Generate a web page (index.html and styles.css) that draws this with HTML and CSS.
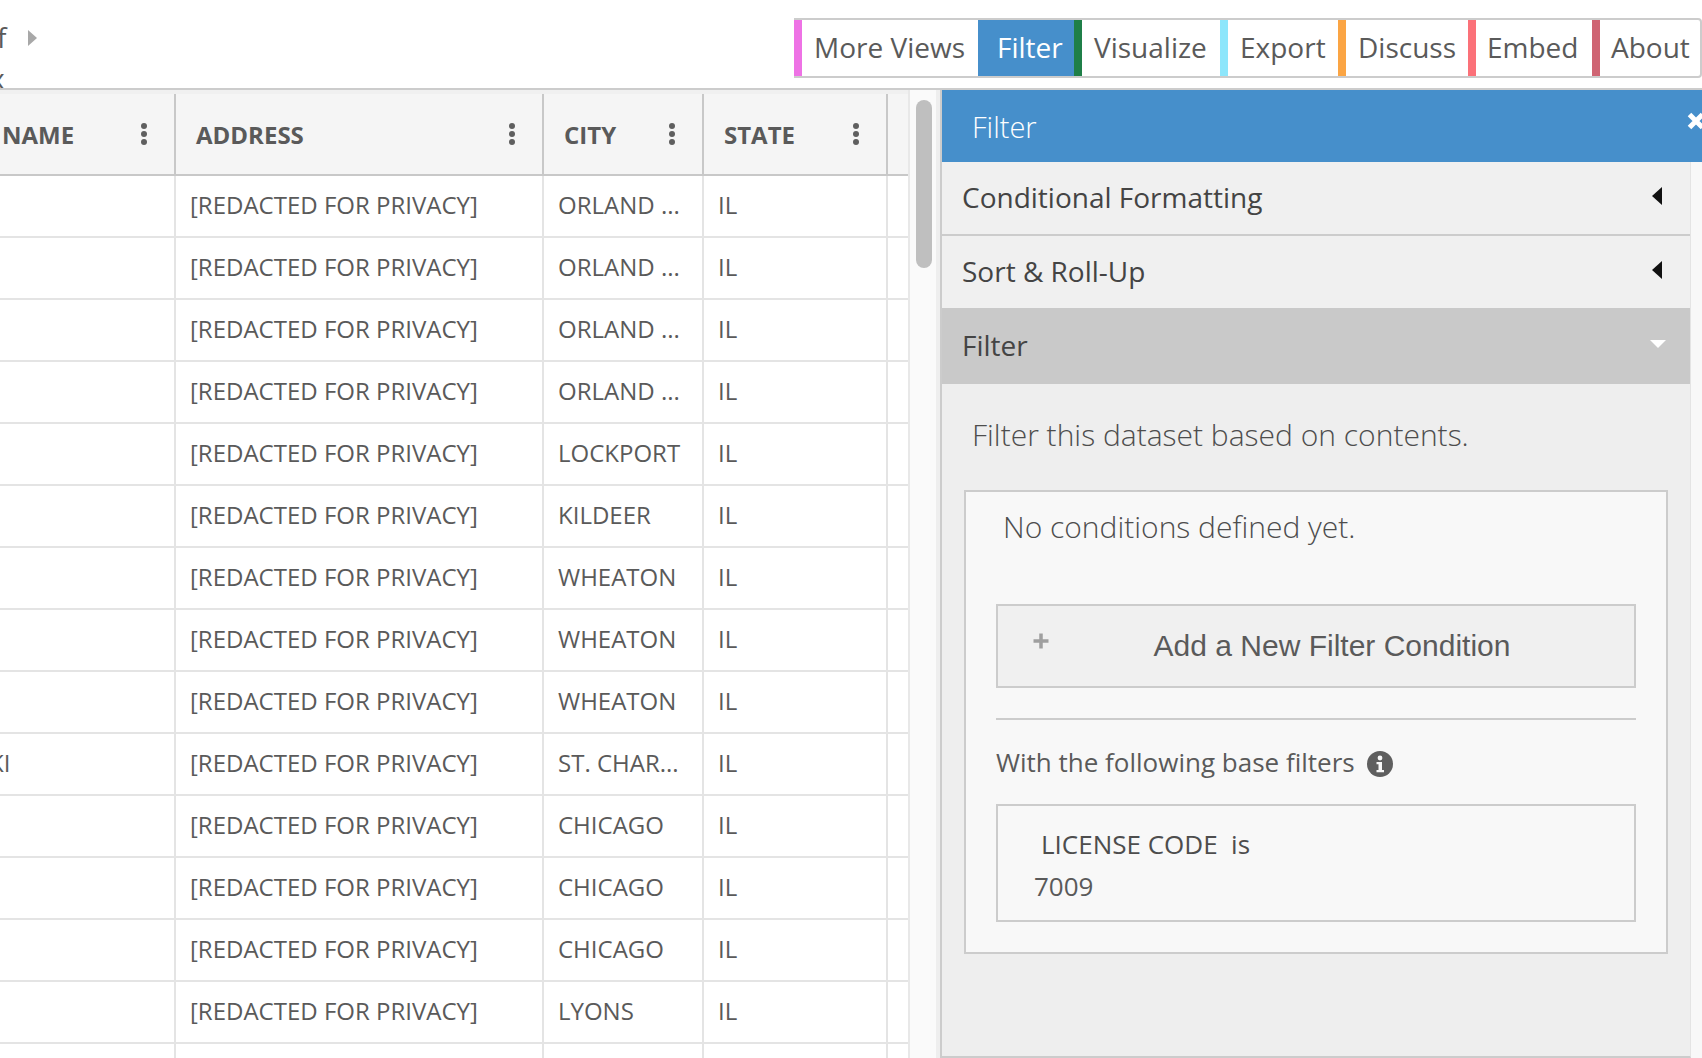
FILE: index.html
```html
<!DOCTYPE html>
<html lang="en">
<head>
<meta charset="utf-8">
<title>Filter</title>
<link rel="stylesheet" href="styles.css">
</head>
<body>
<header class="topbar">
  <div class="crumb">
    <span class="crumb-f">f</span>
    <span class="crumb-arrow"></span>
    <span class="crumb-k">x</span>
  </div>
  <nav class="tabs">
    <a class="tab c-pink">More Views</a>
    <a class="tab c-blue active">Filter</a>
    <a class="tab c-green">Visualize</a>
    <a class="tab c-cyan">Export</a>
    <a class="tab c-orange">Discuss</a>
    <a class="tab c-red">Embed</a>
    <a class="tab c-rose">About</a>
  </nav>
</header>
<main class="main">
  <section class="grid">
    <div class="grid-row head">
      <div class="cell c1"><span class="htext">NAME</span><i class="kebab"></i></div>
      <div class="cell c2"><span class="htext">ADDRESS</span><i class="kebab"></i></div>
      <div class="cell c3"><span class="htext">CITY</span><i class="kebab"></i></div>
      <div class="cell c4"><span class="htext">STATE</span><i class="kebab"></i></div>
      <div class="cell c5"></div>
    </div>
    <div class="grid-row"><div class="cell c1"></div><div class="cell c2">[REDACTED FOR PRIVACY]</div><div class="cell c3">ORLAND ...</div><div class="cell c4">IL</div><div class="cell c5"></div></div>
    <div class="grid-row"><div class="cell c1"></div><div class="cell c2">[REDACTED FOR PRIVACY]</div><div class="cell c3">ORLAND ...</div><div class="cell c4">IL</div><div class="cell c5"></div></div>
    <div class="grid-row"><div class="cell c1"></div><div class="cell c2">[REDACTED FOR PRIVACY]</div><div class="cell c3">ORLAND ...</div><div class="cell c4">IL</div><div class="cell c5"></div></div>
    <div class="grid-row"><div class="cell c1"></div><div class="cell c2">[REDACTED FOR PRIVACY]</div><div class="cell c3">ORLAND ...</div><div class="cell c4">IL</div><div class="cell c5"></div></div>
    <div class="grid-row"><div class="cell c1"></div><div class="cell c2">[REDACTED FOR PRIVACY]</div><div class="cell c3">LOCKPORT</div><div class="cell c4">IL</div><div class="cell c5"></div></div>
    <div class="grid-row"><div class="cell c1"></div><div class="cell c2">[REDACTED FOR PRIVACY]</div><div class="cell c3">KILDEER</div><div class="cell c4">IL</div><div class="cell c5"></div></div>
    <div class="grid-row"><div class="cell c1"></div><div class="cell c2">[REDACTED FOR PRIVACY]</div><div class="cell c3">WHEATON</div><div class="cell c4">IL</div><div class="cell c5"></div></div>
    <div class="grid-row"><div class="cell c1"></div><div class="cell c2">[REDACTED FOR PRIVACY]</div><div class="cell c3">WHEATON</div><div class="cell c4">IL</div><div class="cell c5"></div></div>
    <div class="grid-row"><div class="cell c1"></div><div class="cell c2">[REDACTED FOR PRIVACY]</div><div class="cell c3">WHEATON</div><div class="cell c4">IL</div><div class="cell c5"></div></div>
    <div class="grid-row"><div class="cell c1 name-tail">KI</div><div class="cell c2">[REDACTED FOR PRIVACY]</div><div class="cell c3">ST. CHAR...</div><div class="cell c4">IL</div><div class="cell c5"></div></div>
    <div class="grid-row"><div class="cell c1"></div><div class="cell c2">[REDACTED FOR PRIVACY]</div><div class="cell c3">CHICAGO</div><div class="cell c4">IL</div><div class="cell c5"></div></div>
    <div class="grid-row"><div class="cell c1"></div><div class="cell c2">[REDACTED FOR PRIVACY]</div><div class="cell c3">CHICAGO</div><div class="cell c4">IL</div><div class="cell c5"></div></div>
    <div class="grid-row"><div class="cell c1"></div><div class="cell c2">[REDACTED FOR PRIVACY]</div><div class="cell c3">CHICAGO</div><div class="cell c4">IL</div><div class="cell c5"></div></div>
    <div class="grid-row"><div class="cell c1"></div><div class="cell c2">[REDACTED FOR PRIVACY]</div><div class="cell c3">LYONS</div><div class="cell c4">IL</div><div class="cell c5"></div></div>
    <div class="grid-row"><div class="cell c1"></div><div class="cell c2"></div><div class="cell c3"></div><div class="cell c4"></div><div class="cell c5"></div></div>
  </section>
  <div class="scroll"><div class="thumb"></div></div>
  <aside class="panel">
    <div class="panel-head"><span>Filter</span>
      <svg class="close" viewBox="0 0 20 20" width="20" height="20" aria-hidden="true"><path d="M3.500 3.500l13 13M16.500 3.500l-13 13" stroke="#fff" stroke-width="5"/></svg>
    </div>
    <div class="panel-body">
      <div class="acc"><span>Conditional Formatting</span><i class="tri-left"></i></div>
      <div class="acc"><span>Sort &amp; Roll-Up</span><i class="tri-left"></i></div>
      <div class="acc open"><span>Filter</span><i class="tri-down"></i></div>
      <p class="intro">Filter this dataset based on contents.</p>
      <div class="box">
        <p class="none">No conditions defined yet.</p>
        <div class="add">
          <svg class="plus" viewBox="0 0 18 18" width="18" height="18" aria-hidden="true"><path d="M9 1.500v15M1.500 9h15" stroke="#9f9f9f" stroke-width="3.500"/></svg>
          <span>Add a New Filter Condition</span>
        </div>
        <hr class="rule">
        <p class="base">With the following base filters
          <svg class="info" viewBox="0 0 26 26" width="26" height="26" aria-hidden="true"><circle cx="13" cy="13" r="13" fill="#5f5f5f"/><circle cx="13" cy="7" r="2.400" fill="#f8f8f8"/><path d="M9.500 11h5.500v8h2v2.200H9.500V19h2v-5.800h-2z" fill="#f8f8f8"/></svg>
        </p>
        <div class="basebox">
          <div class="lic">LICENSE CODE&nbsp; is</div>
          <div class="val">7009</div>
        </div>
      </div>
    </div>
  </aside>
</main>
</body>
</html>
```
FILE: styles.css
```css
* { box-sizing: border-box; }
html, body { margin: 0; height: 100%; overflow: hidden; }
body { width: 1702px; height: 1058px; background: #fff; color: #5a5a5a; font-family: "Open Sans", sans-serif; display: flex; flex-direction: column; }

.topbar { height: 88px; flex: none; display: flex; justify-content: space-between; position: relative; }
.crumb { position: relative; width: 60px; overflow: hidden; }
.crumb-f { position: absolute; left: -3px; top: 18px; font-size: 28px; line-height: 38px; }
.crumb-arrow { position: absolute; left: 28px; top: 30px; width: 0; height: 0; border-left: 9px solid #a8a8a8; border-top: 8px solid transparent; border-bottom: 8px solid transparent; }
.crumb-k { position: absolute; left: -10px; top: 63px; font-size: 28px; line-height: 30px; height: 25px; overflow: hidden; }

.tabs { margin: 18px 0 0 0; height: 60px; display: flex; border: 2px solid #ccc; border-left: 0; border-radius: 0 4px 4px 0; }
.tab { display: flex; align-items: center; font-size: 28px; color: #5a5a5a; border-left: 8px solid; height: 56px; white-space: nowrap; padding-bottom: 3px; }
.c-pink { border-color: #ee72e5; width: 184px; padding-left: 12px; }
.c-blue { border-left: 0; width: 96px; padding-left: 19px; }
.c-green { border-color: #1f7f48; width: 146px; padding-left: 12px; }
.c-cyan { border-color: #8de6fb; width: 118px; padding-left: 12px; }
.c-orange { border-color: #fba544; width: 130px; padding-left: 12px; }
.c-red { border-color: #fb7179; width: 124px; padding-left: 11px; }
.c-rose { border-color: #cf6473; width: 108px; padding-left: 11px; }
.tab.active { background: #468fcb; color: #fff; }

.main { flex: 1; min-height: 0; display: flex; border-top: 2px solid #ccc; position: relative; }

.grid { width: 910px; flex: none; padding-top: 4px; overflow: hidden; background: linear-gradient(#f0f0f0 4px, #fff 4px); border-right: 2px solid #e8e8e8; }
.grid-row { display: grid; grid-template-columns: 176px 368px 160px 184px 20px; height: 62px; border-bottom: 2px solid #e4e4e4; font-size: 24px; }
.grid-row.head { height: 82px; background: #f5f5f5; border-bottom: 2px solid #c8c8c8; font-weight: 700; }
.cell { display: flex; align-items: center; border-right: 2px solid #e4e4e4; padding-left: 14px; padding-bottom: 4px; white-space: nowrap; position: relative; min-width: 0; }
.cell.c5 { border-right: 0; }
.head .cell { border-right-color: #c8c8c8; padding-left: 20px; padding-bottom: 0; }
.head .cell.c1 { padding-left: 2px; }
.name-tail { padding-left: 0; margin-left: -11px; }

.kebab { position: absolute; right: 27px; top: 37px; width: 6px; height: 6px; border-radius: 50%; background: #5f5f5f; box-shadow: 0 -8px 0 #5f5f5f, 0 8px 0 #5f5f5f; }

.scroll { width: 30px; flex: none; background: #fafafa; padding: 10px 0 0 6px; border-right: 4px solid #eee; }
.thumb { width: 16px; height: 168px; background: #bfbfbf; border-radius: 8px; }

.panel { flex: 1; min-width: 0; border-left: 2px solid #ccc; display: flex; flex-direction: column; background: #f8f8f8; }
.panel-head { height: 72px; flex: none; background: #468fcb; color: #fff; display: flex; align-items: center; justify-content: space-between; padding-left: 30px; font-size: 29px; font-weight: 300; }
.close { margin-right: -4px; margin-top: -10px; }
.panel-body { flex: 1; width: 749px; background: #eee; border-right: 1px solid #e4e4e4; border-bottom: 2px solid #ccc; }
.acc { height: 74px; display: flex; align-items: center; justify-content: space-between; padding: 0 28px 0 20px; font-size: 28px; color: #444; background: #f0f0f0; border-bottom: 2px solid #ccc; }
.acc span { margin-top: -2px; }
.acc:nth-child(2) { height: 72px; border-bottom: 0; }
.acc.open { height: 76px; background: #c9c9c9; border-bottom: 0; }
.tri-left { width: 0; height: 0; border-right: 10px solid #111; border-top: 9px solid transparent; border-bottom: 9px solid transparent; margin-top: -4px; }
.tri-down { width: 0; height: 0; border-top: 8px solid #fff; border-left: 8px solid transparent; border-right: 8px solid transparent; margin: -4px -4px 0 0; }
.intro { margin: 0; padding: 30px 0 0 30px; font-size: 30px; font-weight: 300; line-height: 42px; color: #4d4d4d; }
.box { margin: 34px 0 0 22px; width: 704px; height: 464px; background: #f8f8f8; border: 2px solid #ccc; padding: 0 30px; }
.none { margin: 0; padding: 14px 0 0 7px; font-size: 30px; font-weight: 300; line-height: 42px; color: #4d4d4d; }
.add { margin-top: 56px; height: 84px; background: #f0f0f0; border: 2px solid #ccc; position: relative; display: flex; align-items: center; justify-content: center; font-family: "Liberation Sans", Arial, sans-serif; font-size: 30px; padding-left: 32px; }
.add span { margin-top: -1px; }
.plus { position: absolute; left: 34px; top: 26px; filter: blur(.6px); }
.rule { border: 0; height: 2px; background: #ccc; margin: 30px 0 0; }
.base { margin: 0; padding-top: 22px; font-size: 26px; line-height: 40px; display: flex; align-items: center; gap: 12px; }
.info { margin-top: 4px; }
.basebox { margin-top: 22px; height: 118px; border: 2px solid #ccc; font-size: 26px; }
.lic { padding: 20px 0 0 43px; line-height: 36px; color: #4d4d4d; }
.val { padding: 6px 0 0 36px; line-height: 36px; }
```
